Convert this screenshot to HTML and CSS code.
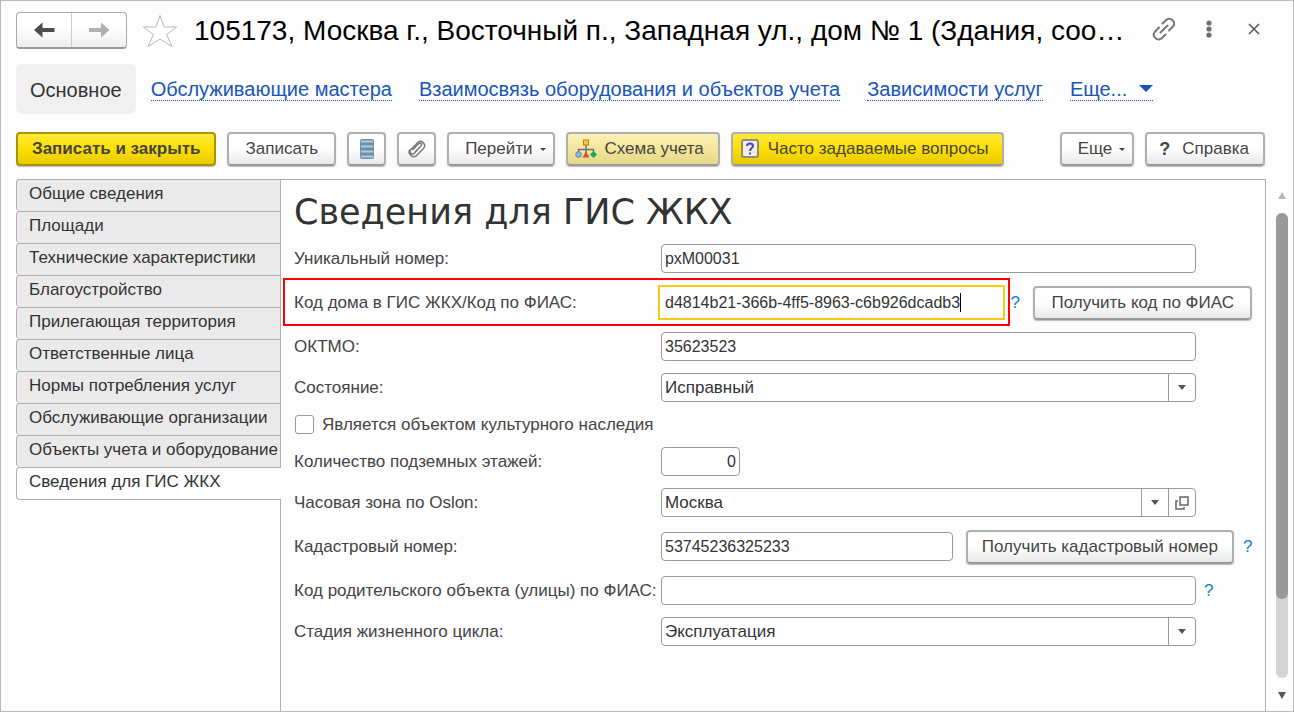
FILE: index.html
```html
<!DOCTYPE html>
<html lang="ru">
<head>
<meta charset="utf-8">
<title>105173, Москва г., Восточный п., Западная ул., дом № 1</title>
<link rel="stylesheet" href="styles.css">
</head>
<body>
<main class="window">
  <header class="titlebar">
    <div class="history">
      <button type="button" aria-label="Назад"><svg width="22" height="18" viewBox="0 0 22 18"><path d="M1 9 9.500 1.500V7H21.500V11H9.500V16.500Z" fill="#4d4d4d"/></svg></button>
      <button type="button" aria-label="Вперед"><svg width="22" height="18" viewBox="0 0 22 18"><path d="M21.500 9 13 1.500V7H1V11H13V16.500Z" fill="#b0b0b0"/></svg></button>
    </div>
    <button type="button" class="icon-button star" aria-label="Избранное"><svg width="36" height="34" viewBox="0 0 36 34"><path d="M18 1.500 22 13H34.500L24.500 20.500 30 32.500 18 25 6 32.500 11.500 20.500 1.500 13H14Z" fill="#fff" stroke="#b4bac2"/></svg></button>
    <h1 class="title">105173, Москва г., Восточный п., Западная ул., дом № 1 (Здания, соо…</h1>
    <div class="window-tools">
      <button type="button" class="icon-button" aria-label="Получить ссылку"><svg width="24" height="24" viewBox="0 0 24 24" fill="none" stroke="#777" stroke-width="2" stroke-linecap="round"><path d="M10.500 6.500 14.500 2.700C18 0 24 4 21.500 9L17 13.500M7 10.500 2.700 15C-.5 19 5 24.500 9.500 21.500L13.500 17.500M8.500 15.500 15.500 8.500"/></svg></button>
      <button type="button" class="icon-button" aria-label="Действия"><svg width="8" height="20" viewBox="0 0 8 20" fill="#6e6e6e"><circle cx="4" cy="4" r="2.600"/><circle cx="4" cy="10" r="2.600"/><circle cx="4" cy="16" r="2.600"/></svg></button>
      <button type="button" class="icon-button" aria-label="Закрыть"><svg width="12" height="12" viewBox="0 0 12 12" stroke="#555" stroke-width="1.500"><path d="M1 1 11 11M11 1 1 11"/></svg></button>
    </div>
  </header>

  <nav class="sections">
    <span class="section-current">Основное</span>
    <a href="#masters">Обслуживающие мастера</a>
    <a href="#equipment">Взаимосвязь оборудования и объектов учета</a>
    <a href="#services">Зависимости услуг</a>
    <a href="#more" class="section-more">Еще... <svg width="14" height="7" viewBox="0 0 14 7"><path d="M0 0H14L7 7Z" fill="#1a55b8"/></svg></a>
  </nav>

  <div class="toolbar">
    <button type="button" class="btn btn-primary">Записать и закрыть</button>
    <button type="button" class="btn">Записать</button>
    <button type="button" class="btn btn-icon" aria-label="Список"><svg width="16" height="20" viewBox="0 0 16 20"><rect x="1" y="0" width="14" height="20" rx="2" fill="#6d91ac"/><path d="M2 2.500H14M2 7.500H14M2 12.500H14M2 17.500H14" stroke="#b3cde0" stroke-width="2"/></svg></button>
    <button type="button" class="btn btn-icon" aria-label="Файлы"><svg width="18" height="18" viewBox="0 0 18 18" fill="none" stroke="#7a7a7a" stroke-width="1.500" stroke-linecap="round"><path d="M5 9.500 10.500 4C12.500 2.200 14.500 4.200 13 6L6.500 13C4 15.500.5 12.500 3 9.500L9.500 2.800C13-.8 19 4 15.500 8.500L8 16C5 18.500-.5 14 1.500 10M12.500 6.500 7 12"/></svg></button>
    <button type="button" class="btn btn-menu">Перейти <svg width="6" height="3" viewBox="0 0 6 3"><path d="M0 0H6L3 3Z" fill="#444"/></svg></button>
    <button type="button" class="btn btn-scheme"><svg width="22" height="20" viewBox="0 0 22 20"><path d="M11 6V15M3.500 13V10.500H18.500V13" fill="none" stroke="#667078" stroke-width="1.500"/><rect x="8.500" y="1" width="5" height="5" fill="#ffc52e" stroke="#b78223"/><circle cx="3.500" cy="15.500" r="2.800" fill="#8dbbe0" stroke="#557fa8"/><path d="M11 12.500 14.500 18.500H7.500Z" fill="#d9503f"/><path d="M18.500 12 22 15.500 18.500 19 15 15.500Z" fill="#15a56d"/></svg>Схема учета</button>
    <button type="button" class="btn btn-faq"><svg width="18" height="20" viewBox="0 0 18 20"><rect x="1" y="1" width="16" height="17" rx="2" fill="#f5efda" stroke="#8e8b85" stroke-width="2"/><path d="M6 7C6 3.500 12 3.500 12 7 12 9 9 9 9 12M9 13.500V15.500" fill="none" stroke="#4646d0" stroke-width="2"/></svg>Часто задаваемые вопросы</button>
    <button type="button" class="btn btn-menu btn-more">Еще <svg width="6" height="3" viewBox="0 0 6 3"><path d="M0 0H6L3 3Z" fill="#444"/></svg></button>
    <button type="button" class="btn btn-help"><b>?</b>Справка</button>
  </div>

  <div class="body">
    <nav class="side">
      <a href="#p1">Общие сведения</a>
      <a href="#p2">Площади</a>
      <a href="#p3">Технические характеристики</a>
      <a href="#p4">Благоустройство</a>
      <a href="#p5">Прилегающая территория</a>
      <a href="#p6">Ответственные лица</a>
      <a href="#p7">Нормы потребления услуг</a>
      <a href="#p8">Обслуживающие организации</a>
      <a href="#p9">Объекты учета и оборудование</a>
      <a href="#p10" class="side-current">Сведения для ГИС ЖКХ</a>
    </nav>
    <form class="panel">
      <h2 class="heading">Сведения для ГИС ЖКХ</h2>
      <div class="row">
        <label for="uid">Уникальный номер:</label>
        <input id="uid" class="field wide" type="text" value="рхМ00031">
      </div>
      <div class="row tall">
        <div class="marked">
          <label for="fias">Код дома в ГИС ЖКХ/Код по ФИАС:</label>
          <div class="active-field"><input id="fias" type="text" value="d4814b21-366b-4ff5-8963-c6b926dcadb3"><span class="caret"></span></div>
        </div>
        <a href="#h1" class="hint hint-near">?</a>
        <button type="button" class="btn">Получить код по ФИАС</button>
      </div>
      <div class="row">
        <label for="oktmo">ОКТМО:</label>
        <input id="oktmo" class="field wide" type="text" value="35623523">
      </div>
      <div class="row">
        <label for="state">Состояние:</label>
        <div class="combo wide">
          <select id="state"><option>Исправный</option></select>
          <button type="button" aria-label="Выбрать состояние"><svg width="8" height="5" viewBox="0 0 8 5"><path d="M0 0H8L4 5Z" fill="#555"/></svg></button>
        </div>
      </div>
      <div class="row check-row">
        <input id="heritage" type="checkbox">
        <label for="heritage">Является объектом культурного наследия</label>
      </div>
      <div class="row">
        <label for="floors">Количество подземных этажей:</label>
        <input id="floors" class="field number" type="text" value="0">
      </div>
      <div class="row">
        <label for="zone">Часовая зона по Oslon:</label>
        <div class="combo wide">
          <select id="zone"><option>Москва</option></select>
          <button type="button" aria-label="Выбрать зону"><svg width="8" height="5" viewBox="0 0 8 5"><path d="M0 0H8L4 5Z" fill="#555"/></svg></button>
          <button type="button" aria-label="Открыть зону"><svg width="14" height="14" viewBox="0 0 14 14" fill="none" stroke="#666" stroke-width="1.500"><path d="M5 1H13V9H5ZM3 5H1V13H9V11"/></svg></button>
        </div>
      </div>
      <div class="row tall">
        <label for="cadastre">Кадастровый номер:</label>
        <input id="cadastre" class="field" type="text" value="53745236325233">
        <button type="button" class="btn btn-cadastre">Получить кадастровый номер</button>
        <a href="#h2" class="hint">?</a>
      </div>
      <div class="row">
        <label for="parent">Код родительского объекта (улицы) по ФИАС:</label>
        <input id="parent" class="field" type="text">
        <a href="#h3" class="hint hint-end">?</a>
      </div>
      <div class="row">
        <label for="stage">Стадия жизненного цикла:</label>
        <div class="combo wide">
          <select id="stage"><option>Эксплуатация</option></select>
          <button type="button" aria-label="Выбрать стадию"><svg width="8" height="5" viewBox="0 0 8 5"><path d="M0 0H8L4 5Z" fill="#555"/></svg></button>
        </div>
      </div>
    </form>
    <div class="scroll">
      <svg width="8" height="7" viewBox="0 0 8 7"><path d="M4 0 8 7H0Z" fill="#bbb"/></svg>
      <div class="track"><div class="thumb"></div></div>
      <svg width="8" height="7" viewBox="0 0 8 7"><path d="M0 0H8L4 7Z" fill="#555"/></svg>
    </div>
  </div>
</main>
</body>
</html>
```
FILE: styles.css
```css
* { box-sizing: border-box; }
body {
  margin: 0;
  font: 17px/20px "Liberation Sans", Arial, sans-serif;
  color: #444;
  background: #fdfdfd;
}
button, input, select { font: inherit; color: inherit; margin: 0; }
button { cursor: pointer; }
svg { display: block; flex: none; }

.window {
  display: flex;
  flex-direction: column;
  min-height: 100vh;
  border: 1px solid #bbb;
  background: #fdfdfd;
}

.titlebar { display: flex; align-items: center; height: 37px; margin: 11px 33px 0 15px; }
.history {
  display: flex;
  flex: none;
  width: 111px;
  height: 37px;
  border: 1px solid #aaa;
  border-bottom: 2px solid #999;
  border-radius: 4px;
  background: linear-gradient(#fff 40%, #eee);
}
.history button {
  display: flex;
  flex: 1;
  align-items: center;
  justify-content: center;
  padding: 0;
  border: 0;
  background: none;
}
.history button + button { border-left: 1px solid #ccc; }
.icon-button { padding: 0; border: 0; background: none; flex: none; }
.star { margin-left: 15px; }
.title {
  flex: 1;
  min-width: 0;
  margin: 0 24px 0 16px;
  overflow: hidden;
  font-size: 28px;
  line-height: 36px;
  font-weight: 400;
  color: #000;
  white-space: nowrap;
  text-overflow: ellipsis;
}
.window-tools { display: flex; align-items: center; gap: 29px; padding-bottom: 4px; }
.window-tools button:last-child { margin-left: 6px; }

.sections {
  display: flex;
  align-items: center;
  gap: 27px;
  margin: 15px 15px 0;
  font-size: 20px;
  line-height: 22px;
}
.section-current {
  padding: 15px 14px 13px;
  margin-right: -12px;
  border-radius: 6px;
  background: #f0f0f0;
  color: #333;
}
.sections a { color: #1a55b8; text-decoration: none; border-bottom: 1px dotted #1a55b8; white-space: nowrap; }
.section-more { display: flex; align-items: center; gap: 12px; }

.toolbar { display: flex; gap: 11px; margin: 18px 28px 0 15px; }
.btn {
  display: flex;
  flex: none;
  align-items: center;
  justify-content: center;
  height: 34px;
  padding: 0 16px;
  border: 2px solid #b0b0b0;
  border-bottom-color: #999;
  border-radius: 4px;
  background: linear-gradient(#fff 50%, #e8e8e8);
  box-shadow: 0 1px 1px #bbb;
  white-space: nowrap;
}
.btn-primary {
  padding: 0 14px;
  font-weight: 700;
  background: linear-gradient(#ffe83b, #fddf00 50%, #e8cb00);
  border-color: #a89300;
}
.btn-icon { width: 39px; padding: 0; }
.btn-menu { gap: 7px; padding-right: 7px; }
.btn-scheme { gap: 8px; padding: 0 14px 0 7px; background: linear-gradient(#fbf1b5, #f3e69a 50%, #e6d88a); }
.btn-faq { gap: 9px; padding: 0 14px 0 8px; background: linear-gradient(#ffe83b, #fddf00 50%, #e8cb00); }
.btn-more { margin-left: auto; }
.btn-help { gap: 12px; padding: 0 14px 0 12px; }
.btn-help b { font-size: 18px; }

.body { display: flex; flex: 1; margin: 13px 5px 0 15px; }
.side { display: flex; flex-direction: column; flex: none; width: 265px; border-right: 1px solid #b0b0b0; }
.side a {
  height: 32px;
  padding: 4px 0 0 12px;
  border: solid #b0b0b0;
  border-width: 1px 0 0 1px;
  border-radius: 4px 0 0 4px;
  background: #eaeaea;
  color: #333;
  text-decoration: none;
  white-space: nowrap;
}
.side .side-current {
  height: 33px;
  margin-right: -1px;
  border-bottom-width: 1px;
  background: #fdfdfd;
}

.panel {
  display: flex;
  flex: 1;
  flex-direction: column;
  gap: 12px;
  min-width: 0;
  padding: 0 13px 12px;
  border: solid #b0b0b0;
  border-width: 1px 1px 0 0;
}
.heading {
  margin: 0 0 -12px;
  font: 400 35px/64px "DejaVu Sans", sans-serif;
  color: #333;
}
.row { display: flex; align-items: center; height: 29px; }
.tall { height: 35px; }
.row label { flex: none; width: 367px; white-space: nowrap; }
.field {
  flex: 1;
  min-width: 0;
  width: 100%;
  height: 29px;
  padding: 0 3px;
  border: 1px solid #999;
  border-radius: 4px;
  background: #fff;
  font-size: 16px;
  color: #333;
}
.wide { margin-right: 56px; }
.row .number { flex: none; width: 79px; text-align: right; }

.marked { position: relative; display: flex; flex: 1; align-items: center; min-width: 0; }
.marked::after {
  content: "";
  position: absolute;
  inset: -7px -5px -6px -11px;
  border: 2px solid #f00;
  pointer-events: none;
}
.marked label { width: 364px; }
.active-field {
  display: flex;
  flex: 1;
  align-items: center;
  min-width: 0;
  height: 35px;
  padding: 0 5px;
  border: 2px solid #f8c91c;
  background: #fff;
}
.active-field input {
  field-sizing: content;
  min-width: 0;
  padding: 0;
  border: 0;
  outline: 0;
  background: none;
  font-size: 16px;
  color: #333;
}
.caret { width: 1px; height: 19px; background: #000; }

.hint { flex: none; width: 9px; color: #0b7fd0; text-decoration: none; }
.hint-near { margin: 0 14px 0 5px; }
.hint-end { margin: 0 39px 0 8px; }
.btn-cadastre { margin: 0 9px 0 13px; padding: 0 14px; }

.combo {
  display: flex;
  flex: 1;
  min-width: 0;
  height: 29px;
  border: 1px solid #999;
  border-radius: 4px;
  background: #fff;
}
.combo select {
  flex: 1;
  min-width: 0;
  padding: 0 3px;
  border: 0;
  appearance: none;
  background: none;
  color: #333;
}
.combo button {
  display: flex;
  align-items: center;
  justify-content: center;
  width: 27px;
  padding: 0;
  border: 0;
  border-left: 1px solid #999;
  background: none;
}
.check-row { height: 21px; gap: 8px; }
.check-row input {
  width: 19px;
  height: 19px;
  margin-left: 1px;
  border: 1px solid #999;
  border-radius: 3px;
  appearance: none;
  background: #fff;
}

.scroll {
  display: flex;
  flex-direction: column;
  align-items: center;
  gap: 14px;
  width: 12px;
  margin-left: 10px;
  padding: 13px 0 12px;
}
.track { flex: 1; width: 12px; border-radius: 6px; background: #d4d4d4; }
.thumb { height: 83%; border-radius: 6px; background: #999; }
```
